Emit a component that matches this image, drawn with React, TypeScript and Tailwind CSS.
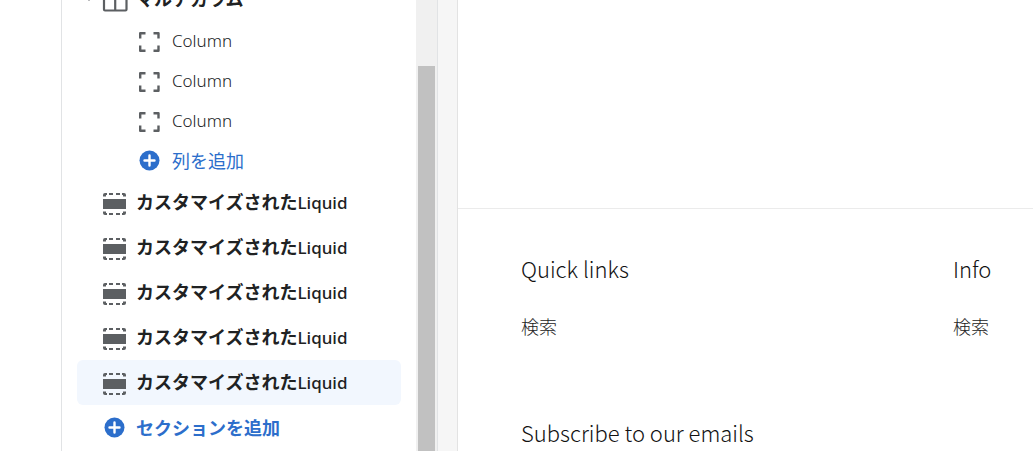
import type { ReactNode } from 'react'

const COLUMNS = ['Column', 'Column', 'Column']

const SECTIONS = [
  { id: 1, label: 'カスタマイズされた', suffix: 'Liquid', active: false },
  { id: 2, label: 'カスタマイズされた', suffix: 'Liquid', active: false },
  { id: 3, label: 'カスタマイズされた', suffix: 'Liquid', active: false },
  { id: 4, label: 'カスタマイズされた', suffix: 'Liquid', active: false },
  { id: 5, label: 'カスタマイズされた', suffix: 'Liquid', active: true },
]

const ColumnsIcon = () => (
  <svg width="26" height="26" viewBox="0 0 26 26" fill="none" stroke="#5c5f62" strokeWidth="2.2" className="shrink-0">
    <rect x="2" y="2" width="22.500" height="22.500" rx="1" />
    <path d="M13.200 2v22" />
  </svg>
)

const BlockIcon = () => (
  <svg width="22" height="22" viewBox="0 0 22 22" fill="none" stroke="#5c5f62" strokeWidth="2.4" strokeLinejoin="round" className="shrink-0">
    <path d="M2.200 7.500V2.200H7.500M15.500 2.200h5V7.500M20.500 14.500v5.300H15.500M7.500 19.800H2.200V14.500" />
  </svg>
)

const SectionIcon = () => (
  <svg width="24" height="24" viewBox="0 0 24 24" fill="#5c5f62" className="shrink-0">
    <path d="M0 7h23v10H0z" />
    <path d="M0 4.500V3Q0 1 2 1H4v2H3v1.500zM6 1h4v2H6zM13 1h4v2h-4zM19 1h2q2 0 2 2v1.500H20V3h-1z" />
    <path d="M0 19.500V21q0 2 2 2h2v-2H3v-1.500zM6 21h4v2H6zM13 21h4v2h-4zM19 23h2q2 0 2-2v-1.500H20V21h-1z" />
  </svg>
)

const PlusIcon = () => (
  <svg width="22" height="22" viewBox="0 0 22 22" className="shrink-0">
    <circle cx="11.500" cy="10.500" r="10" fill="#2c6ecb" />
    <path d="M11.500 5.500v10M6.500 10.500h10" stroke="#fff" strokeWidth="2.400" strokeLinecap="round" />
  </svg>
)

const AddButton = ({ className, children }: { className: string; children: ReactNode }) => (
  <button type="button" className={`flex w-full items-center text-left text-[#2c6ecb] ${className}`}>
    <PlusIcon />
    {children}
  </button>
)

const Sidebar = () => (
  <nav className="w-[354px] shrink-0 overflow-hidden px-[15px] text-lg text-[#202223] font-['Noto_Sans','Noto_Sans_CJK_JP',sans-serif]">
    <button type="button" className="-mt-[25px] flex h-[45px] w-full items-center text-left font-bold">
      <svg width="10" height="6" viewBox="0 0 10 6" fill="#5c5f62" className="ml-[7px] shrink-0">
        <path d="M0 0h10L5 6z" />
      </svg>
      <span className="ml-2 flex items-center gap-2 pt-0.5">
        <ColumnsIcon />
        マルチカラム
      </span>
    </button>

    <ul>
      {COLUMNS.map((name, i) => (
        <li key={i}>
          <button type="button" className="flex h-10 w-full items-center gap-3 pt-[3px] pl-[61px] text-left text-[17px] font-light">
            <BlockIcon />
            {name}
          </button>
        </li>
      ))}
    </ul>
    <AddButton className="h-10 gap-3 pt-[2px] pl-[61px] font-normal">列を追加</AddButton>

    <ul>
      {SECTIONS.map((s) => (
        <li key={s.id}>
          <button
            type="button"
            className={`flex h-[45px] w-full items-center gap-[9px] rounded-md pt-[2px] pl-[26px] text-left ${s.active ? 'bg-[#f2f7fe]' : ''}`}
          >
            <SectionIcon />
            <span className="pb-0.5">
              <span className="font-bold">{s.label}</span>
              <span className="text-[17px] font-medium">{s.suffix}</span>
            </span>
          </button>
        </li>
      ))}
    </ul>
    <AddButton className="h-[45px] gap-[11px] pl-[26px] font-bold">セクションを追加</AddButton>
  </nav>
)

const Preview = () => (
  <main className="min-w-0 flex-1 overflow-hidden border-l border-[#e3e3e3] bg-white text-[#121212] font-['Noto_Sans_CJK_JP',sans-serif]">
    <div className="h-52" />
    <footer className="border-t border-[#ebebeb] pt-[43px] pl-[63px]">
      <div className="grid grid-cols-[432px_1fr]">
        <div>
          <h2 className="text-[22px] leading-8 font-light">Quick links</h2>
          <a href="#" className="mt-[26px] block text-lg leading-8 font-light text-[#222]">検索</a>
        </div>
        <div>
          <h2 className="text-[22px] leading-8 font-light">Info</h2>
          <a href="#" className="mt-[26px] block text-lg leading-8 font-light text-[#222]">検索</a>
        </div>
      </div>
      <h2 className="mt-[74px] text-[22px] leading-8 font-light whitespace-nowrap">Subscribe to our emails</h2>
    </footer>
  </main>
)

export default function App() {
  return (
    <div className="flex h-screen overflow-hidden bg-white">
      <div className="w-[62px] shrink-0 border-r border-[#e1e3e5]" />
      <Sidebar />
      <div className="w-[21px] shrink-0 bg-[#f0f0f0] px-0.5 pt-[66px]">
        <div className="h-full bg-[#c1c1c1]" />
      </div>
      <div className="w-5 shrink-0 border-l border-[#e1e3e5] bg-[#f6f6f6]" />
      <Preview />
    </div>
  )
}
